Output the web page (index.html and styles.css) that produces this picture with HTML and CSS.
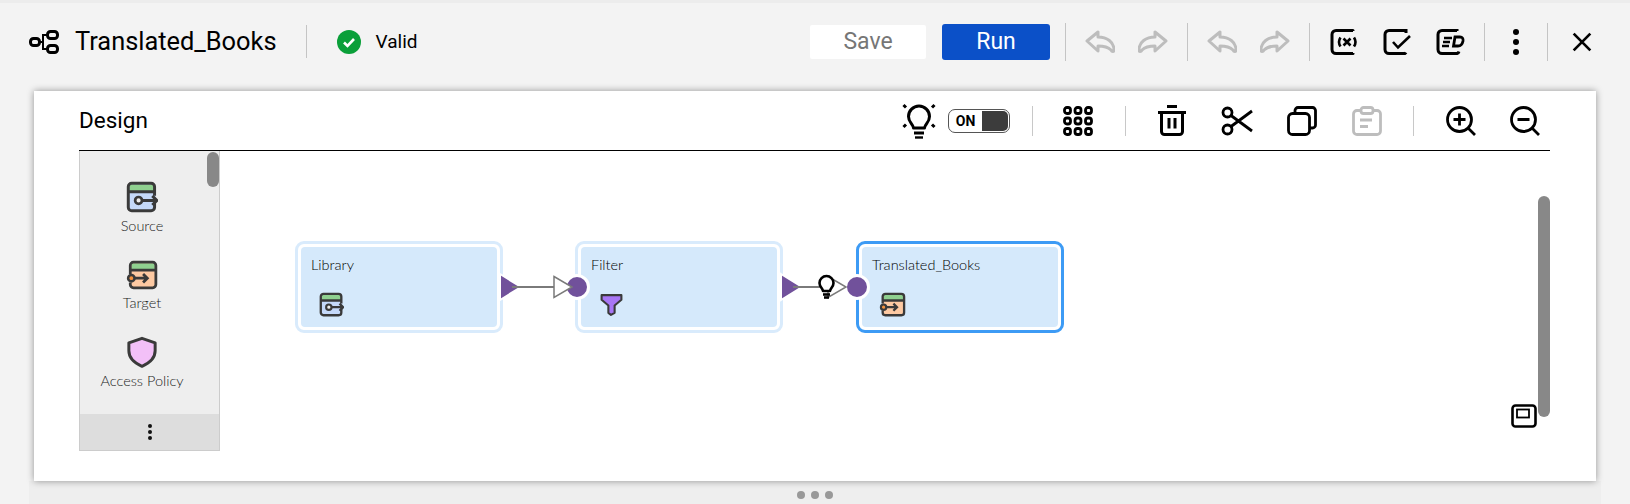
FILE: index.html
```html
<!DOCTYPE html>
<html lang="en">
<head>
    <meta charset="UTF-8">
    <meta name="viewport" content="width=device-width, initial-scale=1.0">
    <title>Translated_Books</title>
    <link rel="stylesheet" href="styles.css">
</head>
<body>
    <svg class="sprite" aria-hidden="true">
        <symbol id="i-undo" viewBox="0 0 30 24">
            <path d="M2 11 L13 2 V7 C22 7 29 12 29 20 C29 22 27 22 26 20 C23 17 18 16 13 16 V21 Z" fill="none" stroke="currentColor" stroke-width="3" stroke-linejoin="round"/>
        </symbol>
        <symbol id="i-redo" viewBox="0 0 30 24">
            <path d="M28 11 L17 2 V7 C8 7 1 12 1 20 C1 22 3 22 4 20 C7 17 12 16 17 16 V21 Z" fill="none" stroke="currentColor" stroke-width="3" stroke-linejoin="round"/>
        </symbol>
        <symbol id="i-source" viewBox="0 0 28 28">
            <rect x="2" y="2" width="24" height="24" rx="4" fill="#c5d9f9"/>
            <rect x="3" y="3" width="22" height="6" fill="#8fd08f"/>
            <path d="M25 19 V23 a3 3 0 0 1-3 3 H5 a3 3 0 0 1-3-3 V5 a3 3 0 0 1 3-3 H22 a3 3 0 0 1 3 3 V13 M2 9.500 H25" fill="none" stroke="#3a3a3a" stroke-width="2.600"/>
            <circle cx="11" cy="17" r="3" fill="#eee" stroke="#3a3a3a" stroke-width="2.400"/>
            <path d="M14 17 H27 M23 13 L27 17 L23 21" fill="none" stroke="#3a3a3a" stroke-width="2.600"/>
        </symbol>
        <symbol id="i-target" viewBox="0 0 30 28">
            <rect x="4" y="2" width="24" height="24" rx="4" fill="#fdc9a2"/>
            <rect x="5" y="3" width="22" height="6" fill="#8fd08f"/>
            <path d="M4 13 V5 a3 3 0 0 1 3-3 H25 a3 3 0 0 1 3 3 V23 a3 3 0 0 1-3 3 H7 a3 3 0 0 1-3-3 V21 M4 9.500 H28" fill="none" stroke="#3a3a3a" stroke-width="2.600"/>
            <circle cx="5" cy="17" r="3" fill="#f5923e" stroke="#3a3a3a" stroke-width="2.400"/>
            <path d="M8 17 H20 M16 13 L20 17 L16 21" fill="none" stroke="#3a3a3a" stroke-width="2.600"/>
        </symbol>
    </svg>

    <header class="topbar">
        <svg class="map-icon" viewBox="0 0 30 24">
            <g fill="none" stroke="#000" stroke-width="3">
                <rect x="1.500" y="8.500" width="9" height="7" rx="3"/>
                <rect x="18.500" y="1.500" width="10" height="7" rx="3"/>
                <rect x="18.500" y="15.500" width="10" height="7" rx="3"/>
                <path d="M10 12 H14 V5 H18 M14 12 V19 H18" stroke-width="2"/>
            </g>
        </svg>
        <span class="map-name">Translated_Books</span>
        <span class="vsep title-sep"></span>
        <svg class="valid-icon" viewBox="0 0 24 24">
            <circle cx="12" cy="12" r="12" fill="#0a9f39"/>
            <path d="M7 12.500 L10.500 16 L17 9" fill="none" stroke="#fff" stroke-width="2.600"/>
        </svg>
        <span class="valid-text">Valid</span>

        <div class="top-actions">
            <button class="btn btn-save">Save</button>
            <button class="btn btn-run">Run</button>
            <span class="vsep"></span>
            <svg class="tb-icon muted"><use href="#i-undo"/></svg>
            <svg class="tb-icon muted"><use href="#i-redo"/></svg>
            <span class="vsep"></span>
            <svg class="tb-icon muted"><use href="#i-undo"/></svg>
            <svg class="tb-icon muted"><use href="#i-redo"/></svg>
            <span class="vsep"></span>
            <svg class="tb-icon tall" viewBox="0 0 30 28">
                <path d="M24 3 V2.500 H7 a4 4 0 0 0-4 4 V21.500 a4 4 0 0 0 4 4 H24 V25" fill="none" stroke="#000" stroke-width="3" stroke-linejoin="round"/>
                <path d="M11.500 9.500 Q8.500 14 11.500 18.500 M25 9.500 Q28 14 25 18.500 M14.500 10.500 L21.500 17.500 M21.500 10.500 L14.500 17.500" fill="none" stroke="#000" stroke-width="2.600"/>
            </svg>
            <svg class="tb-icon tall" viewBox="0 0 30 28">
                <path d="M24 5 V2.500 H7 a4 4 0 0 0-4 4 V21.500 a4 4 0 0 0 4 4 H23 a3 3 0 0 0 1-1" fill="none" stroke="#000" stroke-width="3"/>
                <path d="M11 14 L16 19.500 L28 8" fill="none" stroke="#000" stroke-width="2.600"/>
            </svg>
            <svg class="tb-icon tall" viewBox="0 0 30 28">
                <path d="M22 3 V2.500 H7 a4 4 0 0 0-4 4 V21.500 a4 4 0 0 0 4 4 H22 a3 3 0 0 0 2-2" fill="none" stroke="#000" stroke-width="3"/>
                <path d="M9 10 H17 M8 14 H15 M7 18 H14" fill="none" stroke="#000" stroke-width="2.400"/>
                <path d="M20 9 H25 Q28.500 9 28 13 Q27 18 23 18 H18.500 Z" fill="none" stroke="#000" stroke-width="2.800"/>
            </svg>
            <span class="vsep"></span>
            <div class="kebab"><i></i><i></i><i></i></div>
            <span class="vsep"></span>
            <svg class="close-icon" viewBox="0 0 18 18">
                <path d="M1.500 1.500 L16.500 16.500 M16.500 1.500 L1.500 16.500" fill="none" stroke="#000" stroke-width="2.400"/>
            </svg>
        </div>
    </header>

    <section class="card">
        <div class="design-head">
            <h2 class="design-title">Design</h2>
            <svg class="tool tool-bulb" viewBox="0 0 34 36">
                <g fill="none" stroke="#000" stroke-width="3">
                    <path d="M11.500 25 C11 21 6.500 19.500 6.500 13.500 a10.500 10.500 0 0 1 21 0 C27.500 19.500 23 21 22.500 25 Z" stroke-linejoin="round"/>
                    <path d="M12 30 H22" stroke-width="3"/>
                    <path d="M13 34.500 H21" stroke-width="2.400"/>
                    <path d="M1.500 2 L4 4.500 M32.500 2 L30 4.500 M1.500 24 L4 21.500 M32.500 24 L30 21.500"/>
                </g>
            </svg>
            <div class="toggle"><span class="toggle-label">ON</span><span class="toggle-knob"></span></div>
            <span class="hsep sep-a"></span>
            <svg class="tool tool-grid" viewBox="0 0 30 30">
                <g fill="none" stroke="#000" stroke-width="2.800">
                    <rect x="1.500" y="1.500" width="6" height="6" rx="2.500"/><rect x="12" y="1.500" width="6" height="6" rx="2.500"/><rect x="22.500" y="1.500" width="6" height="6" rx="2.500"/>
                    <rect x="1.500" y="12" width="6" height="6" rx="2.500"/><rect x="12" y="12" width="6" height="6" rx="2.500"/><rect x="22.500" y="12" width="6" height="6" rx="2.500"/>
                    <rect x="1.500" y="22.500" width="6" height="6" rx="2.500"/><rect x="12" y="22.500" width="6" height="6" rx="2.500"/><rect x="22.500" y="22.500" width="6" height="6" rx="2.500"/>
                </g>
            </svg>
            <span class="hsep sep-b"></span>
            <svg class="tool tool-trash" viewBox="0 0 28 31">
                <path d="M9 1.500 H19 M0 7.500 H28 M3.500 7 V26.500 a3 3 0 0 0 3 3 H21.500 a3 3 0 0 0 3-3 V7 M11 13 V23.500 M17 13 V23.500" fill="none" stroke="#000" stroke-width="3"/>
            </svg>
            <svg class="tool tool-cut" viewBox="0 0 32 30">
                <g fill="none" stroke="#000" stroke-width="2.800">
                    <circle cx="6.500" cy="6.500" r="4.500"/>
                    <circle cx="6.500" cy="23.500" r="4.500"/>
                    <path d="M10 9.500 L31 25 M10 20.500 L31 5"/>
                </g>
            </svg>
            <svg class="tool tool-copy" viewBox="0 0 30 30">
                <g fill="none" stroke="#000" stroke-width="2.800">
                    <rect x="1.500" y="7.500" width="21" height="21" rx="4"/>
                    <path d="M8 7 V4.500 a3 3 0 0 1 3-3 H25.500 a3 3 0 0 1 3 3 V19 a3 3 0 0 1-3 3 H23"/>
                </g>
            </svg>
            <svg class="tool tool-paste" viewBox="0 0 30 30">
                <g fill="none" stroke="#bdbdbd" stroke-width="2.800">
                    <path d="M9 4.500 H5 a3.500 3.500 0 0 0-3.500 3.500 V25 a3.500 3.500 0 0 0 3.500 3.500 H25 a3.500 3.500 0 0 0 3.500-3.500 V8 a3.500 3.500 0 0 0-3.500-3.500 H21"/>
                    <rect x="9" y="1.500" width="12" height="6" rx="2.500"/>
                    <path d="M8 14 H20 M8 20.500 H16"/>
                </g>
            </svg>
            <span class="hsep sep-c"></span>
            <svg class="tool tool-zoom" viewBox="0 0 30 30">
                <g fill="none" stroke="#000" stroke-width="2.800">
                    <circle cx="13.500" cy="13.500" r="12"/>
                    <path d="M22 22 L29 29 M7.500 13.500 H19.500 M13.500 7.500 V19.500"/>
                </g>
            </svg>
            <svg class="tool tool-zoom zoom-out" viewBox="0 0 30 30">
                <g fill="none" stroke="#000" stroke-width="2.800">
                    <circle cx="13.500" cy="13.500" r="12"/>
                    <path d="M22 22 L29 29 M7.500 13.500 H19.500"/>
                </g>
            </svg>
        </div>

        <div class="design-body">
            <aside class="palette">
                <div class="palette-thumb"></div>
                <div class="palette-list">
                    <div class="palette-item">
                        <svg class="palette-icon"><use href="#i-source"/></svg>
                        <span>Source</span>
                    </div>
                    <div class="palette-item">
                        <svg class="palette-icon"><use href="#i-target"/></svg>
                        <span class="target-label">Target</span>
                    </div>
                    <div class="palette-item">
                        <svg class="palette-icon" viewBox="0 0 28 28">
                            <path d="M14 2 L25.500 6 V13 C25.500 20 20 24 14 26.500 C8 24 2.500 20 2.500 13 V6 Z" fill="#f3c0f8" stroke="#3a3a3a" stroke-width="2.600" stroke-linejoin="round"/>
                        </svg>
                        <span>Access Policy</span>
                    </div>
                </div>
                <div class="palette-foot"><i></i><i></i><i></i></div>
            </aside>

            <div class="canvas">
                <div class="node node-library">
                    <div class="node-fill">
                        <span class="node-name">Library</span>
                        <svg class="node-icon"><use href="#i-source"/></svg>
                    </div>
                </div>
                <div class="node node-filter">
                    <div class="node-fill">
                        <span class="node-name">Filter</span>
                        <svg class="node-icon" viewBox="0 0 24 24">
                            <path d="M2.500 3 H21.500 V7.500 L15 13 V20 L11.500 22 L9 20 V13 L2.500 7.500 Z" fill="#a876f5" stroke="#3a3a3a" stroke-width="2" stroke-linejoin="round"/>
                        </svg>
                    </div>
                </div>
                <div class="node node-target">
                    <div class="node-fill">
                        <span class="node-name">Translated_Books</span>
                        <svg class="node-icon node-icon-target"><use href="#i-target"/></svg>
                    </div>
                </div>

                <svg class="links" viewBox="0 0 1271 300">
                    <g fill="#71519b" stroke="#fff" stroke-width="2">
                        <path d="M280 123 L301 136 L280 149 Z"/>
                        <path d="M561 123 L582 136 L561 149 Z"/>
                    </g>
                    <g fill="#71519b" stroke="#fff" stroke-width="3">
                        <circle cx="357" cy="136" r="11.500"/>
                        <circle cx="637" cy="136" r="11.500"/>
                    </g>
                    <g stroke="#7a7a7a" stroke-width="2" fill="#fff">
                        <path d="M292 136 H334 M573 136 H600" fill="none"/>
                        <path d="M334 125.500 L352 136 L334 146.500 Z" stroke-width="1.500"/>
                        <path d="M608 125.500 L626 136 L608 146.500 Z" stroke-width="1.500"/>
                    </g>
                    <g transform="translate(598 124)" fill="none" stroke="#000" stroke-width="2.600">
                        <path d="M5 16 C4.500 13 1.500 12 1.500 8 a7 7 0 0 1 14 0 C15.500 12 12.500 13 12 16 Z" fill="#fff" stroke-linejoin="round"/>
                        <path d="M5 19.500 H12"/>
                        <path d="M6 22.500 H11"/>
                    </g>
                </svg>

                <div class="canvas-scroll"></div>
                <svg class="minimap-icon" viewBox="0 0 26 24">
                    <rect x="1.500" y="1.500" width="23" height="21" rx="3" fill="#fff" stroke="#000" stroke-width="2.600"/>
                    <rect x="6" y="5.500" width="12" height="8" fill="#fff" stroke="#000" stroke-width="1.800"/>
                </svg>
            </div>
        </div>
    </section>

    <div class="resize-bar"><i></i><i></i><i></i></div>
</body>
</html>
```

FILE: styles.css
```css
* {
    box-sizing: border-box;
}
html, body {
    height: 100%;
}
body {
    margin: 0;
    background: #f3f3f3;
    font-family: Roboto, Arial, sans-serif;
    color: #000;
    overflow: hidden;
    border-top: 3px solid #ececec;
}
.sprite {
    display: none;
}

/* top bar */
.topbar {
    display: flex;
    align-items: center;
    height: 77px;
    padding-left: 29px;
}
.map-icon {
    width: 30px;
    height: 24px;
}
.map-name {
    margin-left: 16px;
    font-size: 25.4px;
    line-height: 30px;
    margin-top: -2px;
}
.vsep {
    width: 1px;
    height: 38px;
    margin: 0 19px;
    background: #c4c4c4;
}
.title-sep {
    height: 33px;
    margin: 0 30px 0 29px;
}
.valid-icon {
    width: 24px;
    height: 24px;
}
.valid-text {
    margin-left: 15px;
    font-size: 19px;
}
.top-actions {
    display: flex;
    align-items: center;
    margin-left: auto;
    padding-right: 38px;
}
.btn {
    border: 0;
    font-family: inherit;
    font-size: 23px;
    padding: 0;
}
.btn-save {
    width: 116px;
    height: 34px;
    margin-right: 16px;
    background: #fff;
    color: #767676;
    border-radius: 2px;
}
.btn-run {
    width: 108px;
    height: 36px;
    margin-right: -4px;
    background: #0b50c8;
    color: #fff;
    border-radius: 3px;
}
.tb-icon {
    width: 30px;
    height: 24px;
    margin-right: 23px;
}
.tb-icon:nth-of-type(2n) {
    margin-right: 0;
}
.tb-icon.tall {
    height: 28px;
    margin-right: 23px;
}
.tb-icon.tall + .vsep {
    margin-left: -4px;
}
.muted {
    color: #bdbdbd;
}
.kebab {
    display: flex;
    flex-direction: column;
    align-items: center;
    gap: 4px;
    width: 24px;
}
.kebab i {
    width: 6px;
    height: 6px;
    border-radius: 50%;
    background: #000;
}
.close-icon {
    width: 20px;
    height: 20px;
    margin-left: 5px;
}

/* design card */
.card {
    position: relative;
    margin: 11px 34px 0;
    height: 390px;
    background: #fff;
    box-shadow: 0 0 7px rgba(0, 0, 0, 0.4);
    padding: 0 46px 0 45px;
}
.design-head {
    display: flex;
    align-items: center;
    height: 60px;
    border-bottom: 1px solid #000;
}
.design-title {
    margin: -2px auto 0 0;
    font-size: 22.5px;
    font-weight: 400;
}
.tool {
    width: 30px;
    height: 30px;
    flex: none;
}
.tool-bulb {
    width: 34px;
    height: 36px;
}
.toggle {
    display: flex;
    width: 62px;
    height: 24px;
    margin: 0 0 0 12px;
    border: 1px solid #555;
    border-radius: 7px;
    padding: 1px;
}
.toggle-label {
    flex: 1;
    font-size: 14px;
    font-weight: 700;
    line-height: 20px;
    text-align: center;
    padding-right: 1px;
}
.toggle-knob {
    width: 26px;
    background: #3c3c3c;
    border-radius: 0 5px 5px 0;
}
.hsep {
    width: 1px;
    height: 30px;
    background: #c8c8c8;
    flex: none;
}
.sep-a {
    margin: 0 30px 0 22px;
}
.sep-b {
    margin: 0 32px;
}
.tool-trash {
    width: 28px;
    height: 31px;
}
.tool-cut {
    width: 32px;
    margin-left: 35px;
}
.tool-copy {
    margin-left: 34px;
}
.tool-paste {
    margin-left: 35px;
}
.sep-c {
    margin: 0 32px 0 31px;
}
.zoom-out {
    margin-left: 34px;
    margin-right: 10px;
}

.design-body {
    display: flex;
    height: 300px;
}
.palette {
    position: relative;
    display: flex;
    flex-direction: column;
    width: 141px;
    background: #eee;
    border: 1px solid #ccc;
    border-top: 0;
    font-family: Lato, Arial, sans-serif;
    font-weight: 300;
    font-size: 14.5px;
    color: #222;
}
.palette-thumb {
    position: absolute;
    top: 1px;
    right: 0;
    width: 12px;
    height: 35px;
    border-radius: 6px;
    background: #888;
}
.palette-list {
    flex: 1;
    padding: 30px 15px 0 0;
}
.palette-item {
    display: flex;
    flex-direction: column;
    align-items: center;
    height: 77.5px;
}
.palette-icon {
    width: 32px;
    height: 32px;
    margin-bottom: 4px;
}
.target-label {
    margin-top: -1px;
}
.palette-foot {
    display: flex;
    flex-direction: column;
    align-items: center;
    justify-content: center;
    gap: 2px;
    height: 39px;
    background: #ddd;
}
.palette-foot i {
    width: 4px;
    height: 4px;
    border-radius: 50%;
    background: #111;
}

/* mapping canvas, nodes sit at their diagram coordinates */
.canvas {
    position: relative;
    flex: 1;
}
.node {
    position: absolute;
    top: 90px;
    width: 208px;
    height: 92px;
    padding: 3px;
    background: #fff;
    border: 3px solid #d9ebfc;
    border-radius: 9px;
}
.node-library {
    left: 75px;
}
.node-filter {
    left: 355px;
}
.node-target {
    left: 636px;
    border-color: #3d9bf5;
}
.node-fill {
    display: flex;
    flex-direction: column;
    align-items: flex-start;
    height: 100%;
    padding: 9px 0 0 10px;
    background: #d5e9fb;
    border-radius: 4px;
    font-family: Lato, Arial, sans-serif;
    font-weight: 300;
    font-size: 14.5px;
    color: #000;
}
.node-name {
    height: 18px;
}
.node-icon {
    width: 25px;
    height: 25px;
    margin: 18px 0 0 8px;
}
.node-icon-target {
    width: 27px;
    margin-left: 7px;
}
.links {
    position: absolute;
    left: 0;
    top: 0;
    width: 1271px;
    height: 300px;
    pointer-events: none;
}
.canvas-scroll {
    position: absolute;
    left: 1318px;
    top: 45px;
    width: 12px;
    height: 221px;
    border-radius: 6px;
    background: #888;
}
.minimap-icon {
    position: absolute;
    left: 1291px;
    top: 253px;
    width: 26px;
    height: 24px;
}

/* bottom splitter */
.resize-bar {
    display: flex;
    justify-content: center;
    align-items: center;
    gap: 6px;
    height: 23px;
    margin: 0 29px;
    background: #eee;
    padding: 5px 0 0 0;
}
.resize-bar i {
    width: 8px;
    height: 8px;
    border-radius: 50%;
    background: #999;
}
```
